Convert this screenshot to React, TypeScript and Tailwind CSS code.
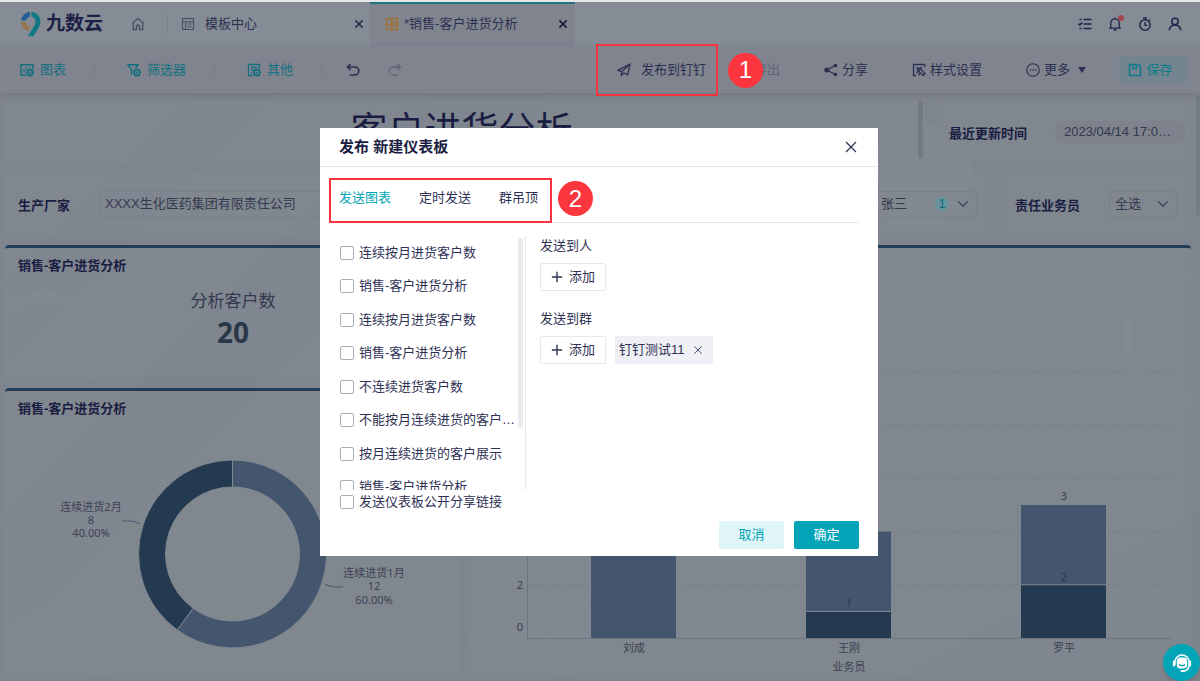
import { useState } from "react";
import type { ReactNode } from "react";

const charts = [
  "连续按月进货客户数",
  "销售-客户进货分析",
  "连续按月进货客户数",
  "销售-客户进货分析",
  "不连续进货客户数",
  "不能按月连续进货的客户展示",
  "按月连续进货的客户展示",
  "销售-客户进货分析",
];

const tabs = ["发送图表", "定时发送", "群吊顶"];

const bars = [
  { name: "刘成", x: 121, dark: 0, light: 5 },
  { name: "王刚", x: 336, dark: 1, light: 3 },
  { name: "罗平", x: 551, dark: 2, light: 3 },
];

type IconProps = { children: ReactNode; size?: string };

function Icon({ children, size = "size-3.5" }: IconProps) {
  return (
    <svg viewBox="0 0 14 14" className={`${size} shrink-0`} fill="none" stroke="currentColor" strokeWidth="1.3" aria-hidden="true">
      {children}
    </svg>
  );
}

function PlusDot() {
  return (
    <>
      <circle cx="10" cy="9.6" r="3" strokeWidth="1.8" />
      <path d="M10 8.400v2.400M8.800 9.600h2.400" strokeWidth="1" />
    </>
  );
}

function Cross({ size = "size-3.5", bold = false }: { size?: string; bold?: boolean }) {
  return (
    <Icon size={size}>
      <path d="M2 2l10 10M12 2L2 12" strokeWidth={bold ? 2.2 : 1.2} />
    </Icon>
  );
}

function Chevron() {
  return (
    <Icon size="size-3">
      <path d="M1.500 4l5.500 5.500L12.500 4" />
    </Icon>
  );
}

function Logo() {
  return (
    <a href="#" className="flex items-center gap-1 text-[19px] font-bold text-[#1d2046]">
      <svg viewBox="0 0 22 26" className="h-[26px] w-[22px]" aria-hidden="true">
        <path d="M1 9.600C1.600 5 5.200 1.200 9.800.7v5C7.800 6.200 6.500 7.600 5.900 9.600z" fill="#205f91" />
        <path d="M.8 11h4.900c.5 2.300 2 3.900 4.400 4.500L8.600 20C4.300 19 1.200 15.600.8 11z" fill="#97764f" />
        <path d="M11.400.7c5 .4 9 4.500 9 9.700 0 2.800-.9 4.900-2.200 7L13.400 25.300H7.800l5.800-9.400c1.200-1.900 1.900-3.300 1.900-5.300 0-2.500-1.700-4.500-4.100-5z" fill="#117885" />
      </svg>
      九数云
    </a>
  );
}

function Header() {
  return (
    <header className="flex h-11 bg-[#868c95] text-[#2c3050]">
      <div className="flex w-[167px] items-center pl-5">
        <Logo />
        <button aria-label="首页" className="ml-7 text-[#474c60]">
          <Icon>
            <path d="M1.500 6.300L7 1.500l5.500 4.800M2.300 5.700v7h3.200V9.500a1.500 1.500 0 013 0v3.200h3.200v-7" />
          </Icon>
        </button>
      </div>
      <div className="flex w-[203px] items-center">
        <span className="h-5 w-px bg-[#7b818b]" />
        <a href="#" className="ml-[13px] flex flex-1 items-center gap-2.5">
          <span className="text-[#474c60]">
            <Icon>
              <path d="M1.500 1.500h11v11h-11zM1.500 4.700h11M4.700 4.700v7.800M6.700 7h4M6.700 9.800h4" strokeWidth="1.100" />
            </Icon>
          </span>
          模板中心
        </a>
        <button aria-label="关闭模板中心" className="mr-1.5">
          <Cross size="size-2.5" bold />
        </button>
      </div>
      <div className="flex w-[205px] items-center border-t-2 border-[#217480] bg-[#80848f] pb-0.5 pl-[15px]">
        <a href="#" className="flex flex-1 items-center gap-[5px]">
          <span className="text-[#a07137]">
            <Icon>
              <path d="M1.500 1.500h11v11h-11zM6.500 1.500v11M1.500 7.600h5M6.500 5.200h6M9.500 5.200v3.500M6.500 8.700h6" strokeWidth="1.500" />
            </Icon>
          </span>
          *销售-客户进货分析
        </a>
        <button aria-label="关闭仪表板" className="mr-[7px] text-[#191c3c]">
          <Cross size="size-2.5" bold />
        </button>
      </div>
      <div className="flex flex-1 items-center justify-end gap-4 pr-[18px] text-[#22254a]">
        <button aria-label="任务列表">
          <Icon>
            <path d="M5.500 2.500h8M5.500 7h8M5.500 11.500h8M1.500 2.500h2M1.500 11.500h2M.5 6.600l1.400 1.500 2.200-2.600" strokeWidth="1.600" />
          </Icon>
        </button>
        <button aria-label="通知" className="relative">
          <Icon>
            <path d="M1 11.200h12M2.800 11V6a4.200 4.200 0 018.400 0v5M5.500 13h3M7 .5v1.500" />
          </Icon>
          <span className="absolute -top-0.5 -right-0.5 size-1.5 rounded-full bg-[#a8444f]" />
        </button>
        <button aria-label="计时">
          <Icon>
            <circle cx="7" cy="8" r="5.200" strokeWidth="1.500" />
            <path d="M5 .9h4M7 1v1.800M7 5v3.300h2.500M11 2.500l1 1" />
          </Icon>
        </button>
        <button aria-label="我的账户">
          <Icon>
            <circle cx="7" cy="4.500" r="3.200" strokeWidth="1.500" />
            <path d="M1.200 13.300C1.700 10 4 7.900 7 7.900s5.300 2.100 5.800 5.400" strokeWidth="1.500" />
          </Icon>
        </button>
      </div>
    </header>
  );
}

function Divider() {
  return <span className="mr-8 ml-7 h-3.5 w-px bg-[#787d88]" />;
}

function Toolbar() {
  const item = "flex items-center gap-1.5";
  return (
    <div className="relative flex h-[47px] items-center bg-[#80848f] pr-3.5 pl-5 text-[#2c3050] shadow-[0_2px_6px_rgba(60,66,80,0.2)]">
      <div className="flex items-center text-[#13707f]">
        <button className={item}>
          <Icon>
            <path d="M6 12.200H1V1.800h12V6M4 9.500V6M6.500 6V4.200M9.500 5V4.200" strokeWidth="1.500" />
            <PlusDot />
          </Icon>
          图表
        </button>
        <Divider />
        <button className={item}>
          <Icon>
            <path d="M4.500 12V6.500L1 1.700h10L8.500 5" strokeWidth="1.500" />
            <PlusDot />
          </Icon>
          筛选器
        </button>
        <Divider />
        <button className={item}>
          <Icon>
            <path d="M6 12.500H1.500v-11h11V6M4 4.500h6M4 7h2.500M4 9.500h1" />
            <PlusDot />
          </Icon>
          其他
        </button>
        <span className="mr-6 ml-7 h-3.5 w-px bg-[#787d88]" />
      </div>
      <button aria-label="撤销">
        <Icon>
          <path d="M4.500 1L1.500 4l3 3M1.500 4h7.300a4 4 0 010 8H3.500" strokeWidth="1.600" />
        </Icon>
      </button>
      <button aria-label="重做" className="ml-7 text-[#5f6472]">
        <Icon>
          <path d="M9.500 1l3 3-3 3M12.500 4H5.200a4 4 0 000 8h5.300" />
        </Icon>
      </button>

      <div className="ml-auto flex items-center">
        <div className="relative mr-7">
          <button className="flex items-center gap-2.5">
            <Icon>
              <path d="M13 1L1 7.200l3.500 1.600v3.700l2.300-2.600 4 1.900zM4.500 8.800L13 1" strokeLinejoin="round" />
            </Icon>
            发布到钉钉
          </button>
          <span className="pointer-events-none absolute -top-4 -right-3 -left-[21px] h-[52px] border-[2px] border-[#f9333f]" />
          <span className="absolute -top-[7px] left-[111px] z-10 flex size-[35px] items-center justify-center rounded-full bg-[#fc363f] text-2xl text-white">1</span>
        </div>
        <button className="mr-11 flex items-center gap-1.5 text-[#5f6472]">
          <Icon>
            <path d="M7 1.500H1.500v11h11V8M8 6l5-5M9 1h4v4" />
          </Icon>
          导出
        </button>
        <button className="mr-11 flex items-center gap-1">
          <Icon>
            <path d="M11.500 2.500L2.800 7l8.700 4.500" />
            <g fill="currentColor" stroke="none">
              <circle cx="11.500" cy="2.500" r="1.800" />
              <circle cx="2.800" cy="7" r="2.500" />
              <circle cx="11.500" cy="11.500" r="1.800" />
            </g>
          </Icon>
          分享
        </button>
        <button className="mr-11 flex items-center gap-1">
          <Icon>
            <path d="M13 1.500H1.500v11H4M13 1.500V4M4.500 10L10 4M5 5l3 .3 5 5.500-1.700 1.700L5.800 7.500zM8 9.500L6.500 12.500" />
          </Icon>
          样式设置
        </button>
        <button className="mr-[33px] flex items-center gap-1">
          <Icon>
            <circle cx="7" cy="7" r="6.300" strokeWidth="1.100" />
            <path d="M3.700 7h1.300M6.400 7h1.300M9.100 7h1.300" />
          </Icon>
          更多
          <svg viewBox="0 0 8 6" className="ml-1 h-1.5 w-2" fill="currentColor" aria-hidden="true">
            <path d="M0 0h8L4 6z" />
          </svg>
        </button>
        <button className="flex h-7 w-[67px] items-center justify-center gap-1 bg-[#74858f] pr-1 text-[#0d7c8a]">
          <Icon>
            <path d="M1.500 1.500h9l2 2v9h-11zM5 1.500v4h3.500v-4" strokeWidth="1.500" />
          </Icon>
          保存
        </button>
      </div>
    </div>
  );
}

// soft circles and bands that decorate the dashboard background
function Backdrop() {
  return (
    <svg className="absolute inset-0 size-full" aria-hidden="true">
      <path d="M195 0L0 195v80L275 0zM430 0L0 430v120L550 0z" fill="#7b818a" opacity="0.4" />
      <path d="M1200 420L900 587h300z" fill="#7b818a" opacity="0.4" />
      <circle cx="918" cy="84" r="54" fill="#868d95" opacity="0.5" />
    </svg>
  );
}

function Bubbles({ top }: { top: string }) {
  return (
    <div aria-hidden="true" className={`absolute inset-x-0 ${top} h-[140px]`}>
      <span className="absolute top-0 left-[109px] size-[64px] rounded-full border-3 border-[#838992]" />
      <span className="absolute top-[34px] -left-[24px] size-[124px] rounded-full border-[12px] border-[#828891]" />
    </div>
  );
}

type FilterProps = { label: string; value: string; width: string; count?: number };

function Filter({ label, value, width, count }: FilterProps) {
  return (
    <div className={`relative flex h-[27px] items-center text-[#34384f] ${width}`}>
      <select aria-label={label} className="size-full appearance-none rounded-sm border border-[#7a808b] pl-[5px]">
        <option>{value}</option>
      </select>
      {count && (
        <span className="pointer-events-none absolute right-7 flex size-3.5 items-center justify-center rounded-full bg-[#66949e] text-xs text-[#0c6b79]">
          {count}
        </span>
      )}
      <span className="pointer-events-none absolute right-2">
        <Chevron />
      </span>
    </div>
  );
}

function Donut() {
  return (
    <svg viewBox="0 0 456 282" className="absolute inset-0 w-full font-['Noto_Sans','Noto_Sans_CJK_SC',sans-serif] text-[11px]">
      <g stroke="#818790" strokeWidth="1">
        <path d="M227.500 69a94 94 0 1 1-55.250 170.050l15.870-21.850A67 67 0 1 0 227.500 96z" fill="#43566e" />
        <path d="M172.250 239.050A94 94 0 0 1 227.500 69v27a67 67 0 0 0-39.380 121.200z" fill="#243a50" />
      </g>
      <path d="M117 130h8q5 0 10 3M320 193q5 3 10 3h8" fill="none" stroke="#46596f" />
      <g fill="#3c4252" textAnchor="middle">
        <text x="86" y="120">连续进货2月</text>
        <text x="86" y="133">8</text>
        <text x="86" y="146">40.00%</text>
        <text x="369" y="186">连续进货1月</text>
        <text x="369" y="199">12</text>
        <text x="369" y="213">60.00%</text>
      </g>
    </svg>
  );
}

function BarChart() {
  const base = 390;
  const unit = 26.6;
  return (
    <svg viewBox="0 0 721 430" className="absolute inset-0 w-full font-['Noto_Sans','Noto_Sans_CJK_SC',sans-serif] text-[11px]">
      {[2, 4, 6, 8, 10].map((n) => (
        <path key={n} d={`M57 ${base - n * unit}H701`} stroke="#787e88" strokeDasharray="3 2" />
      ))}
      <path d="M57.500 60v330M57 390.500h644" stroke="#6e747f" fill="none" />
      {bars.map((bar) => {
        const middle = base - bar.dark * unit;
        const top = middle - bar.light * unit;
        return (
          <g key={bar.name}>
            <rect x={bar.x} y={top} width="85" height={middle - top} fill="#43566e" />
            {bar.dark > 0 && (
              <>
                <rect x={bar.x} y={middle} width="85" height={base - middle} fill="#243a50" />
                <path d={`M${bar.x} ${middle}h85`} stroke="#818790" />
                <text x={bar.x + 43} y={middle - 4} fill="#2d3749" textAnchor="middle">{bar.dark}</text>
              </>
            )}
            <text x={bar.x + 43} y={top - 5} fill="#363c4d" textAnchor="middle">{bar.light}</text>
            <text x={bar.x + 43} y="404" fill="#3c4252" textAnchor="middle">{bar.name}</text>
          </g>
        );
      })}
      <g fill="#3c4252">
        <text x="53" y="341" textAnchor="end">2</text>
        <text x="53" y="383" textAnchor="end">0</text>
        <text x="379" y="423" textAnchor="middle">业务员</text>
      </g>
    </svg>
  );
}

function Dashboard() {
  const card = "rounded bg-[#818790]/70";
  const chartCard = "relative overflow-hidden rounded-t border-t-[3px] border-[#213c56] bg-[#818790]/80";
  return (
    <main className="relative flex flex-1 flex-col gap-2.5 overflow-hidden bg-[#7f858e] pt-2 pr-[9px] pb-1.5 pl-[5px] text-[#34384f]">
      <Backdrop />
      <div className="relative flex gap-3">
        <div className={`flex h-[62px] flex-1 overflow-hidden ${card}`}>
          <h1 className="flex-1 text-center text-[37px] leading-[62px] text-[#1a1d42]">客户进货分析</h1>
          <span className="mr-0.5 h-[58px] w-[5px] rounded-full bg-[#747a84]" />
        </div>
        <div className={`flex h-[62px] w-[254px] items-center pr-1.5 pl-3 ${card}`}>
          <b className="flex-1 pt-1 text-[#1a1d42]">最近更新时间</b>
          <span className="w-[130px] rounded-full bg-[#7d828c] py-px pl-[9px]">2023/04/14 17:0…</span>
        </div>
      </div>
      <div className="relative flex gap-2.5">
        <div className={`flex h-[62px] w-[390px] items-center pr-3.5 pl-[13px] ${card}`}>
          <b className="w-[81px] pt-1 text-[#1a1d42]">生产厂家</b>
          <Filter label="生产厂家" value="XXXX生化医药集团有限责任公司" width="w-[280px]" />
        </div>
        <div className={`flex h-[62px] flex-1 items-center justify-end pr-3.5 ${card}`}>
          <Filter label="客户经理" value="张三" width="w-[102px]" count={1} />
        </div>
        <div className={`flex h-[62px] w-[190px] items-center justify-between pr-3.5 pl-3.5 ${card}`}>
          <b className="pt-1 text-[#1a1d42]">责任业务员</b>
          <Filter label="责任业务员" value="全选" width="w-[68px]" />
        </div>
      </div>
      <div className="relative grid flex-1 grid-cols-[456fr_721fr] gap-[9px]">
        <div className="flex flex-col gap-2.5">
          <section className={`h-[133px] px-[13px] py-2 ${chartCard}`}>
            <Bubbles top="top-[9px]" />
            <h2 className="relative font-bold text-[#1a1d42]">销售-客户进货分析</h2>
            <div className="relative mt-3 text-center">
              <p className="text-[17px] leading-7">分析客户数</p>
              <p className="font-['Noto_Sans',sans-serif] text-[28px] leading-8 font-bold text-[#2a3747]">20</p>
            </div>
          </section>
          <section className={`flex-1 px-[13px] py-2 ${chartCard}`}>
            <Bubbles top="top-[188px]" />
            <h2 className="relative font-bold text-[#1a1d42]">销售-客户进货分析</h2>
            <Donut />
          </section>
        </div>
        <section className={`px-[13px] py-2 ${chartCard}`}>
          <Bubbles top="top-[340px]" />
          <span className="absolute top-[24px] -right-[66px] size-[134px] rounded-full border-[8px] border-[#838992]" />
          <span className="absolute -top-[18px] right-[66px] size-[46px] rounded-full border-3 border-[#838992]" />
          <h2 className="relative font-bold text-[#1a1d42]">销售-客户进货分析</h2>
          <BarChart />
        </section>
      </div>
      <span className="absolute top-[3px] right-0 h-[119px] w-1 bg-[#757b84]" />
    </main>
  );
}

function CheckRow({ label }: { label: string }) {
  return (
    <label className="flex min-w-0 items-center gap-[5px]">
      <input type="checkbox" className="size-3.5 shrink-0 appearance-none rounded-xs border border-[#a9afbb] bg-white checked:bg-[#02a4b7]" />
      <span className="truncate">{label}</span>
    </label>
  );
}

function AddButton() {
  return (
    <button className="flex h-7 w-[66px] items-center justify-center gap-1.5 rounded-xs border border-[#e6e8ec]">
      <Icon size="size-3">
        <path d="M7 1v12M1 7h12" strokeWidth="1.600" />
      </Icon>
      添加
    </button>
  );
}

function PublishDialog({ onClose }: { onClose: () => void }) {
  const [active, setActive] = useState(tabs[0]);

  return (
    <div className="fixed inset-0 z-20 flex items-start justify-center pt-32 pr-0.5">
      <div role="dialog" aria-label="发布 新建仪表板" className="w-[558px] bg-white text-[#2e3154]">
        <div className="flex h-[39px] items-center justify-between border-b border-[#e6e8ec] pr-5 pl-[19px]">
          <h2 className="text-[15px] font-bold text-[#1a1d42]">发布 新建仪表板</h2>
          <button aria-label="关闭" onClick={onClose}>
            <Cross />
          </button>
        </div>
        <div className="px-[19px]">
          <div className="relative flex h-14 gap-7 border-b border-[#e6e8ec] pt-3.5 pb-2">
            {tabs.map((tab) => (
              <button key={tab} onClick={() => setActive(tab)} className={tab === active ? "text-[#02a4b7]" : ""}>
                {tab}
              </button>
            ))}
            <span className="pointer-events-none absolute top-[11px] -left-2.5 h-[45px] w-[223px] border-[2px] border-[#f9333f]" />
            <span className="absolute top-3.5 left-[219px] flex size-[35px] items-center justify-center rounded-full bg-[#fc363f] text-2xl text-white">2</span>
          </div>
          <div className="mt-[13px] flex h-[254px]">
            <div className="relative w-[187px] overflow-hidden border-r border-[#e6e8ec]">
              <div className="grid h-[268px] w-[177px] auto-rows-fr grid-cols-1 pl-px">
                {charts.map((name, i) => (
                  <CheckRow key={i} label={name} />
                ))}
              </div>
              <span className="absolute top-0.5 right-0.5 h-[190px] w-[5px] rounded-full bg-[#e9ebee]" />
            </div>
            <div className="flex-1 pl-3.5">
              <p>发送到人</p>
              <div className="mt-[7px]">
                <AddButton />
              </div>
              <p className="mt-[18px]">发送到群</p>
              <div className="mt-[7px] flex gap-[9px]">
                <AddButton />
                <span className="flex h-7 w-[98px] items-center gap-2 bg-[#eff0f5] pl-1">
                  钉钉测试11
                  <button aria-label="移除">
                    <Cross size="size-2.5" />
                  </button>
                </span>
              </div>
            </div>
          </div>
          <div className="mt-0.5 pl-px">
            <CheckRow label="发送仪表板公开分享链接" />
          </div>
          <div className="mt-[9px] flex justify-end gap-2.5 pb-[7px]">
            <button onClick={onClose} className="h-7 w-[65px] rounded-xs bg-[#e0f5f8] text-[#02a4b7]">取消</button>
            <button onClick={onClose} className="h-7 w-[65px] rounded-xs bg-[#02a4b7] text-white">确定</button>
          </div>
        </div>
      </div>
    </div>
  );
}

function App() {
  const [open, setOpen] = useState(true);

  return (
    <div className="flex min-h-screen flex-col border-t-2 border-[#e4e6e8] bg-[#7f858e] font-['Liberation_Sans','Noto_Sans_CJK_SC',sans-serif] text-[13px] leading-5">
      <Header />
      <div className="z-10">
        <Toolbar />
      </div>
      <Dashboard />
      {open && <PublishDialog onClose={() => setOpen(false)} />}
      <button aria-label="在线客服" className="fixed right-0 bottom-0 z-30 flex size-[37px] items-center justify-center rounded-full bg-[#02a4b7] text-white shadow-md">
        <svg viewBox="0 0 20 20" className="size-5" fill="none" stroke="currentColor" strokeWidth="1.500" aria-hidden="true">
          <path d="M3 12V9a7 7 0 0114 0v3c0 4-2.500 5.800-5.500 6" />
          <rect x="4.800" y="4.500" width="10.400" height="11" rx="3.500" fill="currentColor" stroke="none" />
          <path d="M7 11.500q3 2.500 6 0" stroke="#02a4b7" />
          <path d="M2 8.500v4M18 8.500v4M9.500 18h2.500" strokeWidth="2.200" strokeLinecap="round" />
        </svg>
      </button>
    </div>
  );
}

export default App;
